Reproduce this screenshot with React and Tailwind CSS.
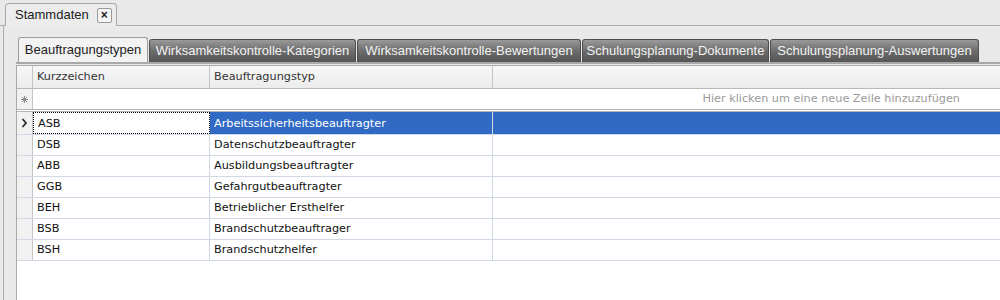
import React from "react";

const tabs = [
  { label: "Beauftragungstypen", w: "w-[130px]", active: true },
  { label: "Wirksamkeitskontrolle-Kategorien", w: "w-[207px]" },
  { label: "Wirksamkeitskontrolle-Bewertungen", w: "w-[224px]" },
  { label: "Schulungsplanung-Dokumente", w: "w-[187px]" },
  { label: "Schulungsplanung-Auswertungen", w: "w-[209px]" },
];

const rows = [
  { code: "ASB", name: "Arbeitssicherheitsbeauftragter" },
  { code: "DSB", name: "Datenschutzbeauftragter" },
  { code: "ABB", name: "Ausbildungsbeauftragter" },
  { code: "GGB", name: "Gefahrgutbeauftragter" },
  { code: "BEH", name: "Betrieblicher Ersthelfer" },
  { code: "BSB", name: "Brandschutzbeauftrager" },
  { code: "BSH", name: "Brandschutzhelfer" },
];

const App = () => {
  return (
    <div className="w-[1000px] h-[300px] overflow-hidden bg-[#e9e9e9] font-['Liberation_Sans',Arial,sans-serif] text-[12px]">
      {/* document tab strip */}
      <div className="h-[26px] flex items-end pl-[5px] border-b border-[#adadad]">
        <div className="h-[23px] -mb-px flex items-center gap-[8px] pl-[9px] pr-[4px] bg-[#ececec] border border-b-0 border-[#a8a8a8] rounded-t-[4px]">
          <span className="text-[13px] text-[#222]">Stammdaten</span>
          <span className="w-[15px] h-[15px] flex items-center justify-center border border-[#9a9a9a] rounded-[2px] bg-[#f4f4f4] text-[12px] font-bold leading-none text-[#222]">
            ×
          </span>
        </div>
      </div>

      <div className="ml-[3px] h-[274px] border-l border-[#adadad] pl-[12px] pt-[12px] flex flex-col">
        {/* inner tabs */}
        <div className="h-[26px] flex items-end gap-px pl-[2px] border-b-2 border-[#a9a9a9]">
          {tabs.map((t) =>
            t.active ? (
              <div
                key={t.label}
                className={`${t.w} h-[25px] flex items-center justify-center bg-[#f2f2f2] border border-b-0 border-[#9c9c9c] rounded-t-[3px] text-[13px] text-[#222]`}
              >
                {t.label}
              </div>
            ) : (
              <div
                key={t.label}
                className={`${t.w} h-[23px] flex items-center justify-center bg-gradient-to-b from-[#9a9a9a] via-[#6c6c6c] to-[#555555] border border-b-0 border-[#4e4e4e] rounded-t-[3px] text-[13px] text-[#f2f2f2]`}
              >
                {t.label}
              </div>
            )
          )}
        </div>

        {/* grid */}
        <div className="flex-1 mt-px border-l border-t border-[#a9a9a9] bg-white flex flex-col font-['DejaVu_Sans',Verdana,sans-serif] text-[11.25px]">
          {/* header */}
          <div className="h-[23px] flex border-b border-[#b8b8b8] bg-gradient-to-b from-[#f7f7f7] to-[#ececec] text-[#333]">
            <div className="w-[16px] border-r border-[#c4c4c4]" />
            <div className="w-[177px] border-r border-[#c4c4c4] pl-[4px] flex items-center">Kurzzeichen</div>
            <div className="w-[283px] border-r border-[#c4c4c4] pl-[4px] flex items-center">Beauftragungstyp</div>
            <div className="flex-1" />
          </div>

          {/* new row */}
          <div className="h-[23px] flex border-b-[3px] border-double border-[#b4b4b4]">
            <div className="w-[16px] flex items-center justify-center bg-[#f1f1f1] border-r border-[#c4c4c4]">
              <svg width="7" height="7" viewBox="0 0 7 7" stroke="#8a8a8a" strokeWidth="1">
                <line x1="3.5" y1="0" x2="3.5" y2="7" />
                <line x1="0" y1="3.5" x2="7" y2="3.5" />
                <line x1="1" y1="1" x2="6" y2="6" />
                <line x1="6" y1="1" x2="1" y2="6" />
              </svg>
            </div>
            <div className="flex-1 flex items-center justify-end pr-[40px] pt-px text-[#9a9a9a]">
              Hier klicken um eine neue Zeile hinzuzufügen
            </div>
          </div>

          {/* data rows */}
          {rows.map((r, i) => {
            const sel = i === 0;
            return (
              <div
                key={r.code}
                className={`${sel ? "h-[23px]" : "h-[21px]"} flex border-b border-[#d0d7e5] text-[#111]`}
              >
                <div className="w-[16px] flex items-center justify-center bg-[#f1f1f1] border-r border-[#c4c4c4]">
                  {sel && (
                    <svg width="7" height="10" viewBox="0 0 7 10" fill="none" stroke="#2a2a2a" strokeWidth="1.8">
                      <polyline points="1.5,1 5,5 1.5,9" />
                    </svg>
                  )}
                </div>
                <div
                  className={`w-[177px] pl-[4px] flex items-center border-r ${
                    sel ? "border border-dotted border-black pt-[2px]" : "border-[#d0d7e5] pt-px"
                  }`}
                >
                  {r.code}
                </div>
                <div
                  className={`w-[283px] pl-[4px] flex items-center border-r border-[#d0d7e5] ${
                    sel ? "bg-[#316ac5] text-white pt-[2px]" : "pt-px"
                  }`}
                >
                  {r.name}
                </div>
                <div className={`flex-1 ${sel ? "bg-[#316ac5]" : ""}`} />
              </div>
            );
          })}
        </div>
      </div>
    </div>
  );
};

export default App;
